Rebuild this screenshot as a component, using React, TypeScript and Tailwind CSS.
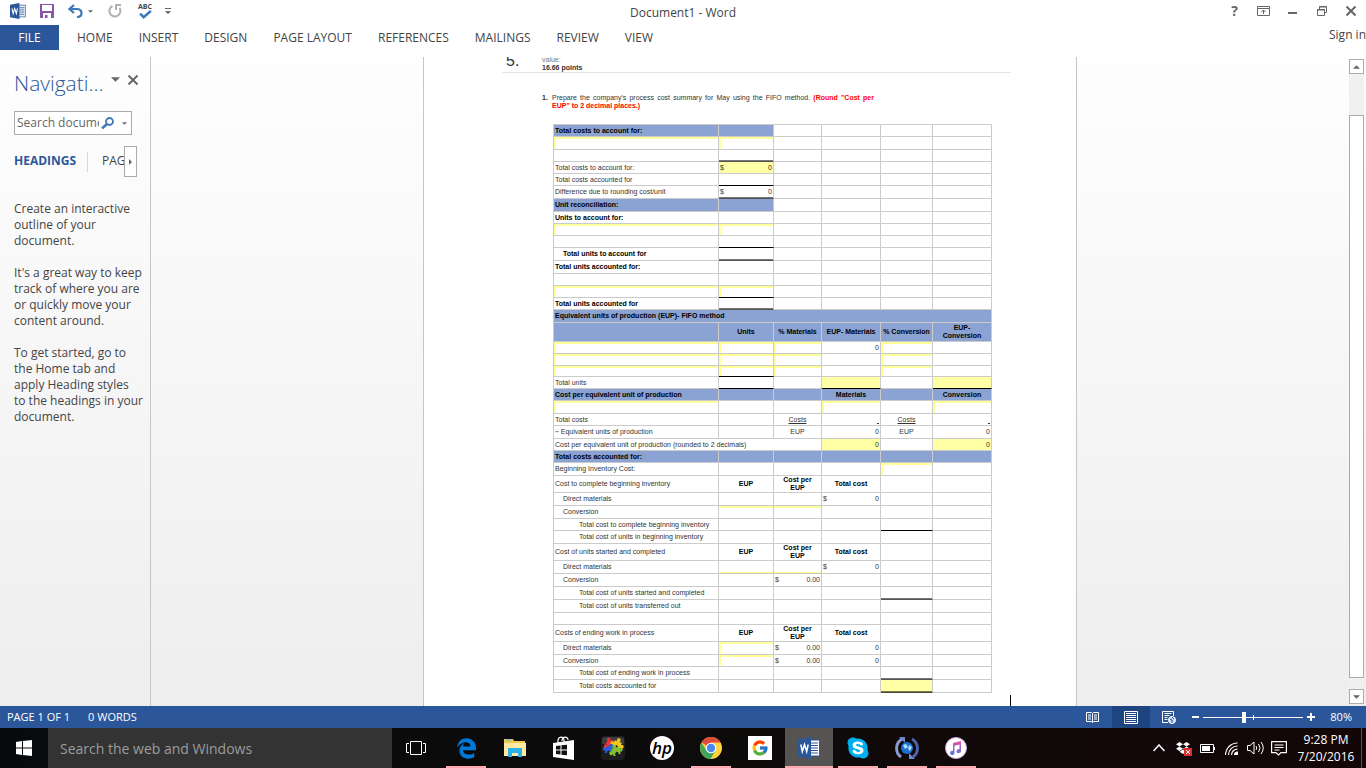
import type { ReactNode } from 'react';
import { FaDropbox, FaEdgeLegacy, FaSkype } from 'react-icons/fa';
import { FcGoogle } from 'react-icons/fc';
import clsx from 'clsx';

type CellKind =
  | 'plain' | 'blue' | 'entry' | 'entryTop' | 'entryBottom' | 'yellow'
  | 'lineBottom' | 'thickBottom' | 'yellowLine' | 'yellowThick' | 'entryLine';

interface Cell {
  text?: ReactNode;
  kind?: CellKind;
  align?: 'center' | 'right';
  bold?: boolean;
  indent?: 1 | 2;
  span?: number;
  dollar?: boolean;
}

interface Row {
  size: 'xs' | 's' | 'm' | 'l' | 'xl';
  cells: Cell[];
}

const kindClass: Record<CellKind, string> = {
  plain: 'border-[#cbcbcb]',
  blue: 'border-[#cbcbcb] bg-[#8aa3d3]',
  entry: 'border-[#cbcbcb] shadow-[inset_2px_2px_0_#ffff99]',
  entryTop: 'border-[#cbcbcb] shadow-[inset_0_2px_0_#ffff99]',
  entryBottom: 'border-[#cbcbcb] shadow-[inset_0_-1px_0_#ffff80]',
  yellow: 'border-[#cbcbcb] bg-[#ffffa6]',
  lineBottom: 'border-r-[#cbcbcb] border-b-black',
  thickBottom: 'border-r-[#cbcbcb] border-b-[#555] shadow-[inset_0_-1px_0_#777]',
  yellowLine: 'border-r-[#cbcbcb] border-b-black bg-[#ffffa6]',
  yellowThick: 'border-r-[#cbcbcb] border-b-[#4a4a35] bg-[#ffffa6] shadow-[inset_0_-1px_0_#77774a]',
  entryLine: 'border-r-[#cbcbcb] border-b-black shadow-[inset_2px_2px_0_#ffff99]',
};

const rowClass = { xs: 'h-[11px]', s: 'h-3', m: 'h-[13px]', l: 'h-[17px]', xl: 'h-[19px]' };

const P: Cell = {};
const B: Cell = { kind: 'blue' };
const E: Cell = { kind: 'entry' };
const LINE: Cell = { kind: 'lineBottom' };
const THICK: Cell = { kind: 'thickBottom' };
const zero: Cell = { text: '0', align: 'right' };
const label = (text: string, indent?: 1 | 2): Cell => ({ text, indent });
const strong = (text: string, indent?: 1 | 2): Cell => ({ text, indent, bold: true });
const head = (text: string): Cell => ({ text, bold: true, kind: 'blue' });
const headMid = (text: ReactNode): Cell => ({ text, bold: true, kind: 'blue', align: 'center' });
const mid = (text: ReactNode, bold = false): Cell => ({ text, bold, align: 'center' });
const money = (text: string, kind?: CellKind): Cell => ({ text, kind, dollar: true });
const costPerEup = mid(<>Cost per<br />EUP</>, true);

const rows: Row[] = [
  { size: 's', cells: [head('Total costs to account for:'), B, P, P, P, P] },
  { size: 'm', cells: [E, E, P, P, P, P] },
  { size: 's', cells: [P, THICK, P, P, P, P] },
  { size: 's', cells: [label('Total costs to account for:'), money('0', 'yellow'), P, P, P, P] },
  { size: 's', cells: [label('Total costs accounted for'), LINE, P, P, P, P] },
  { size: 'm', cells: [label('Difference due to rounding cost/unit'), money('0', 'thickBottom'), P, P, P, P] },
  { size: 'm', cells: [head('Unit reconciliation:'), B, P, P, P, P] },
  { size: 's', cells: [strong('Units to account for:'), P, P, P, P, P] },
  { size: 's', cells: [E, E, P, P, P, P] },
  { size: 's', cells: [P, LINE, P, P, P, P] },
  { size: 'm', cells: [strong('Total units to account for', 1), THICK, P, P, P, P] },
  { size: 'm', cells: [strong('Total units accounted for:'), P, P, P, P, P] },
  { size: 's', cells: [P, P, P, P, P, P] },
  { size: 's', cells: [E, { kind: 'entryLine' }, P, P, P, P] },
  { size: 's', cells: [strong('Total units accounted for'), THICK, P, P, P, P] },
  { size: 'm', cells: [{ ...head('Equivalent units of production (EUP)- FIFO method'), span: 6 }] },
  { size: 'xl', cells: [B, headMid('Units'), headMid('% Materials'), headMid('EUP- Materials'), headMid('% Conversion'), headMid(<>EUP-<br />Conversion</>)] },
  { size: 's', cells: [E, E, E, zero, E, P] },
  { size: 's', cells: [E, E, E, P, E, P] },
  { size: 'xs', cells: [E, { kind: 'entryLine' }, E, P, E, P] },
  { size: 's', cells: [label('Total units'), LINE, P, { kind: 'yellowLine' }, P, { kind: 'yellowLine' }] },
  { size: 's', cells: [head('Cost per equivalent unit of production'), B, B, headMid('Materials'), B, headMid('Conversion')] },
  { size: 'm', cells: [E, P, P, E, P, E] },
  { size: 's', cells: [label('Total costs'), P, mid(<u>Costs</u>), { text: <u>&nbsp;</u>, align: 'right' }, mid(<u>Costs</u>), { text: <u>&nbsp;</u>, align: 'right' }] },
  { size: 'm', cells: [label('÷ Equivalent units of production'), P, mid('EUP'), zero, mid('EUP'), zero] },
  { size: 's', cells: [{ ...label('Cost per equivalent unit of production (rounded to 2 decimals)'), span: 3 }, { ...zero, kind: 'yellow' }, P, { ...zero, kind: 'yellow' }] },
  { size: 's', cells: [head('Total costs accounted for:'), B, B, B, B, B] },
  { size: 'm', cells: [label('Beginning Inventory Cost:'), P, P, P, E, P] },
  { size: 'l', cells: [label('Cost to complete beginning inventory'), mid('EUP', true), costPerEup, mid('Total cost', true), P, P] },
  { size: 'm', cells: [label('Direct materials', 1), P, P, money('0'), P, P] },
  { size: 'm', cells: [label('Conversion', 1), { kind: 'entryTop' }, { kind: 'entryTop' }, P, P, P] },
  { size: 's', cells: [label('Total cost to complete beginning inventory', 2), P, P, P, LINE, P] },
  { size: 'm', cells: [label('Total cost of units in beginning inventory', 2), P, P, P, P, P] },
  { size: 'l', cells: [label('Cost of units started and completed'), mid('EUP', true), costPerEup, mid('Total cost', true), P, P] },
  { size: 'm', cells: [label('Direct materials', 1), { kind: 'entryBottom' }, { kind: 'entryBottom' }, money('0'), P, P] },
  { size: 'm', cells: [label('Conversion', 1), P, money('0.00'), P, P, P] },
  { size: 'm', cells: [label('Total cost of units started and completed', 2), P, P, P, THICK, P] },
  { size: 'm', cells: [label('Total cost of units transferred out', 2), P, P, P, P, P] },
  { size: 's', cells: [P, P, P, P, P, P] },
  { size: 'l', cells: [label('Costs of ending work in process'), mid('EUP', true), costPerEup, mid('Total cost', true), P, P] },
  { size: 'm', cells: [label('Direct materials', 1), E, money('0.00'), zero, P, P] },
  { size: 's', cells: [label('Conversion', 1), E, money('0.00'), zero, P, P] },
  { size: 'm', cells: [label('Total cost of ending work in process', 2), P, P, P, THICK, P] },
  { size: 'm', cells: [label('Total costs accounted for', 2), P, P, P, { kind: 'yellowThick' }, P] },
];

function CostTable() {
  return (
    <table className="w-[439px] table-fixed border-separate border-spacing-0 border-t border-l border-[#cbcbcb] text-[7px] leading-[8px] text-[#333]">
      <colgroup>
        <col className="w-[165px]" />
        <col className="w-[55px]" />
        <col className="w-[48px]" />
        <col className="w-[59px]" />
        <col className="w-[52px]" />
        <col className="w-[59px]" />
      </colgroup>
      <tbody>
        {rows.map((row, i) => (
          <tr key={i} className={rowClass[row.size]}>
            {row.cells.map((cell, j) => (
              <td
                key={j}
                colSpan={cell.span}
                className={clsx(
                  'border-r border-b p-0 align-middle',
                  kindClass[cell.kind ?? 'plain'],
                  cell.bold && 'font-bold text-black',
                  cell.align === 'center' && 'text-center',
                  cell.align === 'right' && 'pr-px text-right',
                  !cell.align && !cell.indent && 'pl-px',
                  cell.indent === 1 && 'pl-[9px]',
                  cell.indent === 2 && 'pl-[25px]',
                )}
              >
                {cell.dollar ? (
                  <div className="flex justify-between pr-px"><span>$</span><span>{cell.text}</span></div>
                ) : cell.text}
              </td>
            ))}
          </tr>
        ))}
      </tbody>
    </table>
  );
}

function WordLogo({ className }: { className: string }) {
  return (
    <svg viewBox="0 0 22 22" className={className}>
      <path d="M11 3h10.500v16H11z" fill="#fff" stroke="#2b579a" />
      <path d="M13 6h7M13 8.500h7M13 11h7M13 13.500h7M13 16h7" stroke="#2b579a" />
      <path d="M0 2.500 13 0v22L0 19.500z" fill="#2b579a" />
      <path d="m2.800 7.500 1.500 7 2.200-7 2.200 7 1.500-7" fill="none" stroke="#fff" strokeWidth="1.500" />
    </svg>
  );
}

function Caret({ className }: { className: string }) {
  return (
    <svg viewBox="0 0 8 4" className={className}><path d="M0 0h8L4 4z" fill="currentColor" /></svg>
  );
}

function TitleBar() {
  return (
    <header className="grid h-[25px] shrink-0 grid-cols-[1fr_auto_1fr] items-start text-[#666]">
      <div className="flex h-[22px] items-center pl-[10px]">
        <WordLogo className="size-4" />
        <button aria-label="Save" className="ml-[14px]">
          <svg viewBox="0 0 14 14" className="size-[14px]">
            <path d="M0 0h14v14H0z" fill="#8a55a8" />
            <path d="M2 1h10v6H2zM3 9h8v5H3z" fill="#fff" />
            <path d="M5 11h2.500v3H5z" fill="#8a55a8" />
          </svg>
        </button>
        <button aria-label="Undo" className="ml-[14px]">
          <svg viewBox="0 0 15 14" className="h-[14px] w-[15px]" fill="none" stroke="#3e78b5" strokeWidth="2.200">
            <path d="M6 1 1.500 5 6 9M2 5h6.500c3 0 5 1.500 5 4s-2 4-4.500 4" />
          </svg>
        </button>
        <button aria-label="Undo history" className="ml-[5px]"><Caret className="h-[3px] w-[5px]" /></button>
        <button aria-label="Repeat" className="ml-[15px]">
          <svg viewBox="0 0 14 14" className="size-[14px]" fill="none" stroke="#b1b1b1" strokeWidth="2">
            <path d="M4.500 2A5.500 5.500 0 1 0 11.500 4M8 6V1h5" />
          </svg>
        </button>
        <button aria-label="Spelling" className="ml-[15px] flex w-[16px] flex-col items-center">
          <span className="text-[7px] leading-[7px] font-bold text-[#444]">ABC</span>
          <svg viewBox="0 0 14 10" className="h-[9px] w-[13px]" fill="none" stroke="#3e78b5" strokeWidth="2.800"><path d="m1 4 4 4 8-7" /></svg>
        </button>
        <button aria-label="Customize toolbar" className="ml-[12px]">
          <svg viewBox="0 0 6 6" className="size-[6px]"><path d="M0 0h6v1H0zM0 3h6L3 6z" fill="currentColor" /></svg>
        </button>
      </div>
      <h1 className="pt-[4px] text-[12px] leading-[18px] text-[#444]">Document1 - Word</h1>
      <div className="flex h-[22px] items-center justify-end pr-px">
        <button aria-label="Help" className="w-[29px] text-center text-[14px] leading-[14px] font-bold">?</button>
        <button aria-label="Ribbon display options" className="flex w-[29px] justify-center">
          <svg viewBox="0 0 13 10" className="h-[10px] w-[13px]" fill="none" stroke="currentColor">
            <path d="M.5.5h12v9H.5zM1 2.500h11M6.500 8V4M4.500 6l2-2 2 2" />
          </svg>
        </button>
        <button aria-label="Minimize" className="flex w-[29px] justify-center">
          <svg viewBox="0 0 9 10" className="h-[10px] w-[9px]"><path d="M0 6h9v2H0z" fill="currentColor" /></svg>
        </button>
        <button aria-label="Restore" className="flex w-[29px] justify-center">
          <svg viewBox="0 0 10 10" className="size-[10px]" fill="none" stroke="currentColor">
            <path d="M2.500 3V.5h7v6H8M.5 3.500h7v6h-7zM2 1h8M0 4h8" />
          </svg>
        </button>
        <button aria-label="Close" className="flex w-[29px] justify-center">
          <svg viewBox="0 0 10 10" className="size-[10px]" stroke="currentColor" strokeWidth="2"><path d="m.5.5 9 9m0-9-9 9" /></svg>
        </button>
      </div>
    </header>
  );
}

const tabs = ['HOME', 'INSERT', 'DESIGN', 'PAGE LAYOUT', 'REFERENCES', 'MAILINGS', 'REVIEW', 'VIEW'];

function Ribbon() {
  return (
    <nav className="flex h-8 shrink-0 items-start text-[12px] leading-[25px] text-[#444]">
      <button className="w-[59px] bg-[#2b579a] text-white">FILE</button>
      <div className="flex gap-[26px] pl-[18px]">
        {tabs.map((tab) => <button key={tab}>{tab}</button>)}
      </div>
      <button className="ml-auto leading-[20px]">Sign in</button>
    </nav>
  );
}

function NavigationPane() {
  return (
    <aside className="w-[151px] shrink-0 border-r border-[#c6c6c6] pl-[14px] text-[12px] leading-4 text-[#444]">
      <div className="flex items-start pt-[11px]">
        <h2 className="w-[97px] text-[21px] leading-[30px] font-light text-[#2b579a]">Navigati...</h2>
        <button aria-label="Pane options" className="pt-[9px] text-[#666]"><Caret className="h-[5px] w-[9px]" /></button>
        <button aria-label="Close pane" className="ml-2 pt-[7px] text-[#666]">
          <svg viewBox="0 0 10 10" className="size-[10px]" stroke="currentColor" strokeWidth="2"><path d="m.5.5 9 9m0-9-9 9" /></svg>
        </button>
      </div>
      <div className="mt-[13px] flex h-6 w-[118px] items-center border border-[#ababab] bg-white">
        <input aria-label="Search document" placeholder="Search document" className="w-[84px] pl-[2px] text-[12px] outline-none placeholder:text-[#666]" />
        <svg viewBox="0 0 13 12" className="ml-[2px] h-[12px] w-[13px]" fill="none" stroke="#3e78b5" strokeWidth="1.800">
          <circle cx="8.500" cy="4.500" r="3.500" /><path d="M6 7 1 11.500" strokeWidth="2.500" />
        </svg>
        <button aria-label="Search options" className="ml-2 text-[#666]"><Caret className="h-[3px] w-[5px]" /></button>
      </div>
      <div className="mt-[11px] flex h-[31px] items-center">
        <button className="w-[73px] pb-[2px] text-left font-bold text-[#2b579a]">HEADINGS</button>
        <div className="h-5 w-px bg-[#d8d8d8]" />
        <button className="ml-[14px] w-[22px] pb-[2px] text-left">PAG</button>
        <button aria-label="More tabs" className="flex h-[31px] w-[13px] items-center justify-center border border-[#ababab] bg-white text-[#666]">
          <svg viewBox="0 0 3 6" className="h-[6px] w-[3px]"><path d="M0 0v6l3-3z" fill="currentColor" /></svg>
        </button>
      </div>
      <div className="mt-6 space-y-4 whitespace-nowrap">
        <p>Create an interactive<br />outline of your<br />document.</p>
        <p>It's a great way to keep<br />track of where you are<br />or quickly move your<br />content around.</p>
        <p>To get started, go to<br />the Home tab and<br />apply Heading styles<br />to the headings in your<br />document.</p>
      </div>
    </aside>
  );
}

function DocumentPage() {
  return (
    <main className="flex min-w-0 flex-1 justify-center overflow-hidden">
      <article className="w-[654px] border-x border-[#c6c6c6] bg-white pr-[65px] pl-[78px] font-['Liberation_Sans',Arial,sans-serif]">
        <div className="flex h-4 items-end overflow-hidden border-b border-[#e4e4e4] pl-1 text-[#333]">
          <span className="w-[36px] text-[16px] leading-[22px]">5.</span>
          <div className="text-[7px] leading-[8px]">
            <p className="text-[#777]">value:</p>
            <p className="font-bold">16.66 points</p>
          </div>
        </div>
        <div className="mt-[21px] flex pl-[40px] text-[7px] leading-[8px] text-[#333]">
          <b className="w-[10px]">1.</b>
          <p className="w-[322px] text-justify">
            Prepare the company's process cost summary for May using the FIFO method.{' '}
            <b className="text-[#f00]">(Round "Cost per EUP" to 2 decimal places.)</b>
          </p>
        </div>
        <div className="mt-[14px] pl-[51px]"><CostTable /></div>
        <div className="mt-[2px] h-[11px] border-r border-black" />
      </article>
    </main>
  );
}

function ScrollBar() {
  return (
    <div className="flex w-[17px] shrink-0 flex-col pt-[2px] pr-[2px] pb-[2px] text-[#666]">
      <button aria-label="Scroll up" className="flex h-[15px] items-center justify-center border border-[#ababab] bg-white">
        <Caret className="h-1 w-[7px] rotate-180" />
      </button>
      <div className="flex flex-1 flex-col bg-[#f0f0f0] pt-[41px] pb-[11px]">
        <div className="flex-1 border border-[#ababab] bg-white" />
      </div>
      <button aria-label="Scroll down" className="flex h-[15px] items-center justify-center border border-[#ababab] bg-white">
        <Caret className="h-1 w-[7px]" />
      </button>
    </div>
  );
}

function StatusBar() {
  return (
    <footer className="flex h-[22px] shrink-0 items-center bg-[#2b579a] pr-[14px] pl-[7px] text-[11px] text-white">
      <span>PAGE 1 OF 1</span>
      <span className="ml-[18px]">0 WORDS</span>
      <div className="ml-auto flex h-full items-center">
        <button aria-label="Read mode" className="flex h-full w-[39px] items-center justify-center">
          <svg viewBox="0 0 13 13" className="size-[13px]" fill="none" stroke="#fff">
            <path d="M.5 1.500h5l1 1 1-1h5v9h-5l-1 1-1-1h-5zM6.500 2v10M2 4h3M2 6h3M2 8h3M8 4h3M8 6h3M8 8h3" />
          </svg>
        </button>
        <button aria-label="Print layout" className="flex h-full w-[38px] items-center justify-center bg-[#1e4580]">
          <svg viewBox="0 0 14 13" className="h-[13px] w-[14px]" fill="none" stroke="#fff">
            <path d="M.5.5h13v12H.5zM2 2.500h10M2 4.500h10M2 6.500h10M2 8.500h10M2 10.500h10" />
          </svg>
        </button>
        <button aria-label="Web layout" className="flex h-full w-[38px] items-center justify-center">
          <svg viewBox="0 0 14 13" className="h-[13px] w-[14px]" fill="none" stroke="#fff">
            <path d="M6 11.500H.5V.5h11V5M2.500 2.500h7M2.500 4.500h5M2.500 6.500h3M2.500 8.500h3" />
            <circle cx="10" cy="9" r="3.500" fill="#c9dbf2" /><path d="m8 8 2 1v3M10 6l2 2" stroke="#2b579a" />
          </svg>
        </button>
        <button aria-label="Zoom out" className="ml-1 h-[2px] w-[7px] bg-white" />
        <div className="relative mx-[4px] flex h-full w-[100px] items-center">
          <div className="absolute top-[9px] left-[50px] h-[5px] w-px bg-white" />
          <input
            type="range" aria-label="Zoom" min={0} max={100} defaultValue={40}
            className="h-3 w-full appearance-none bg-transparent [&::-webkit-slider-runnable-track]:h-px [&::-webkit-slider-runnable-track]:bg-white [&::-webkit-slider-thumb]:-mt-[5px] [&::-webkit-slider-thumb]:h-[11px] [&::-webkit-slider-thumb]:w-1 [&::-webkit-slider-thumb]:appearance-none [&::-webkit-slider-thumb]:bg-white"
          />
        </div>
        <button aria-label="Zoom in">
          <svg viewBox="0 0 8 8" className="size-2"><path d="M3 0h2v3h3v2H5v3H3V5H0V3h3z" fill="#fff" /></svg>
        </button>
        <span className="ml-[15px]">80%</span>
      </div>
    </footer>
  );
}

function ExplorerIcon() {
  return (
    <svg viewBox="0 0 22 20" className="h-5 w-[22px]">
      <path d="M0 1h9l1 2h11v14H0z" fill="#f2c94c" /><path d="M0 5h22v13H0z" fill="#ffe9a2" />
      <path d="M2 1.500h5v1H2z" fill="#58b7e8" />
      <path d="M4 19v-9h14v9h-4v-4H8v4z" fill="#2cb1e8" />
    </svg>
  );
}

function StoreIcon() {
  return (
    <svg viewBox="0 0 22 24" className="h-6 w-[22px]">
      <path d="M0 7 21 4v20L0 21z" fill="#fff" />
      <path d="M5 7V5c0-5 6-5 6-1v2M9 5c0-5 6-5 6-1" fill="none" stroke="#fff" strokeWidth="1.200" />
      <path d="m3 10 4.500-.5v4H3zM8.500 9.300 14 8.700v4.800H8.500zM3 14.500h4.500v4L3 18zM8.500 14.500H14v4.800l-5.500-.6z" fill="#111" />
    </svg>
  );
}

function PuzzleIcon() {
  const piece = 'M-3-3h2a1.500 1.500 0 1 1 2 0h2v2a1.500 1.500 0 1 1 0 2v2h-2a1.500 1.500 0 1 0-2 0h-2v-2a1.500 1.500 0 1 1 0-2z';
  return (
    <svg viewBox="0 0 24 24" className="size-6">
      <rect width="24" height="24" rx="4" fill="#1c1c1c" /><path d="M1 4q0-3 3-3h16q3 0 3 3v4H1z" fill="#3c3c3c" />
      <g transform="translate(9.500 8.500) rotate(-20) scale(1.250)"><path d={piece} fill="#e8343b" /></g>
      <g transform="translate(16 9) rotate(20) scale(1.250)"><path d={piece} fill="#f3c61c" /></g>
      <g transform="translate(8.500 14.500) rotate(20) scale(1.250)"><path d={piece} fill="#2a5fd6" /></g>
      <g transform="translate(15 15.500) rotate(-20) scale(1.250)"><path d={piece} fill="#86bd2e" /></g>
    </svg>
  );
}

function HpIcon() {
  return (
    <span className="flex size-6 items-center justify-center rounded-full bg-white pb-px text-[17px] leading-none font-semibold text-black italic">hp</span>
  );
}

function ChromeIcon() {
  return (
    <svg viewBox="0 0 22 22" className="size-[22px]">
      <circle cx="11" cy="11" r="11" fill="#ffd23f" />
      <path d="M11 11 1.500 5.500A11 11 0 0 1 20.500 5.500H11z" fill="#e04a3a" />
      <path d="M1.500 5.500A11 11 0 0 0 10.500 22l5-8.500L11 16 6.300 13.500z" fill="#3fa757" />
      <circle cx="11" cy="11" r="5.300" fill="#fff" /><circle cx="11" cy="11" r="4.200" fill="#4a87f0" />
    </svg>
  );
}

function SyncIcon() {
  return (
    <svg viewBox="0 0 24 24" className="size-6" fill="none">
      <path d="M7 3C0 7 0 17 6 21" stroke="#8b9bd0" strokeWidth="3" /><path d="M17 3c7 4 7 14 1 18" stroke="#4d62a8" strokeWidth="3" />
      <path d="M4 1h6v6zM20 23h-6v-6z" fill="#7186c6" />
      <circle cx="12" cy="12" r="6" fill="#1d6fd0" /><path d="m8 9 3-1 2 3-3 2zM14 9l3 2-2 4-2-2z" fill="#a9dcff" />
    </svg>
  );
}

function ItunesIcon() {
  return (
    <svg viewBox="0 0 22 22" className="size-[22px]">
      <defs><linearGradient id="note" x1="0" y1="0" x2="0" y2="1"><stop stopColor="#ef4a9b" /><stop offset="1" stopColor="#4a7bea" /></linearGradient></defs>
      <circle cx="11" cy="11" r="10.500" fill="#fff" stroke="#d9a7dc" />
      <path d="M8 6l8-2v10a2.200 2 0 1 1-1.500-1.800V7.500l-5 1.200v7A2.200 2 0 1 1 8 14z" fill="url(#note)" />
    </svg>
  );
}

const apps: { name: string; icon: ReactNode; running?: boolean; active?: boolean }[] = [
  { name: 'Edge', icon: <FaEdgeLegacy className="size-[21px] text-[#0078d7]" />, running: true },
  { name: 'File Explorer', icon: <ExplorerIcon /> },
  { name: 'Store', icon: <StoreIcon /> },
  { name: 'Puzzle', icon: <PuzzleIcon /> },
  { name: 'HP', icon: <HpIcon /> },
  { name: 'Chrome', icon: <ChromeIcon />, running: true },
  { name: 'Google', icon: <span className="bg-white p-[3px]"><FcGoogle className="size-[18px]" /></span> },
  { name: 'Word', icon: <WordLogo className="size-[22px]" />, running: true, active: true },
  { name: 'Skype', icon: <span className="rounded-full bg-[radial-gradient(#fff_45%,transparent_50%)]"><FaSkype className="size-[24px] text-[#00aff0]" /></span>, running: true },
  { name: 'Sync', icon: <SyncIcon />, running: true },
  { name: 'iTunes', icon: <ItunesIcon />, running: true },
];

function Taskbar() {
  return (
    <div className="flex h-10 shrink-0 items-stretch bg-linear-to-r from-[#080b0d] via-[#0d0b0b] to-[#140608] text-white">
      <button aria-label="Start" className="flex w-12 items-center justify-center">
        <svg viewBox="0 0 16 16" className="size-4" fill="#fff"><path d="m0 2 6-.9v6.400H0zM7 1l9-1v7.500H7zM0 8.500h6v6.400L0 14zM7 8.500h9V16l-9-1z" /></svg>
      </button>
      <input aria-label="Search the web and Windows" placeholder="Search the web and Windows" className="w-[344px] bg-[#333] pl-3 text-[14px] outline-none placeholder:text-[#9c9c9c]" />
      <button aria-label="Task view" className="flex w-12 items-center justify-center">
        <svg viewBox="0 0 20 14" className="h-[14px] w-5" fill="none" stroke="#fff"><path d="M4.500.5h11v13h-11zM3 2.500H.5v9H3M17 2.500h2.500v9H17" /></svg>
      </button>
      <div className="flex gap-px pl-[2px]">
        {apps.map((app) => (
          <button
            key={app.name}
            aria-label={app.name}
            className={clsx('flex w-12 flex-col items-center', app.active && 'bg-[#565452]')}
          >
            <span className="flex flex-1 items-center pt-[2px]">{app.icon}</span>
            <span className={clsx('h-[2px]', app.active ? 'w-12' : 'w-10', app.running && 'bg-[#ffa9b0]')} />
          </button>
        ))}
      </div>
      <div className="ml-auto flex items-center">
        <button aria-label="Show hidden icons" className="flex w-6 justify-center">
          <svg viewBox="0 0 12 8" className="h-2 w-3" fill="none" stroke="#fff" strokeWidth="1.500"><path d="m.5 7 5.500-6 5.500 6" /></svg>
        </button>
        <button aria-label="Dropbox" className="relative flex w-6 justify-center">
          <FaDropbox className="size-[14px]" />
          <svg viewBox="0 0 8 8" className="absolute right-[3px] -bottom-px size-2"><path d="M0 0h8v8H0z" fill="#d9302c" /><path d="m2 2 4 4m0-4-4 4" stroke="#fff" /></svg>
        </button>
        <button aria-label="Battery" className="flex w-6 justify-center">
          <svg viewBox="0 0 15 9" className="h-[9px] w-[15px]" fill="none" stroke="#fff"><path d="M.5.5h13v8H.5zM14.500 3v3" /><path d="M2 2h8v5H2z" fill="#fff" stroke="none" /></svg>
        </button>
        <button aria-label="Network" className="flex w-6 justify-center">
          <svg viewBox="0 0 13 13" className="size-[13px]" fill="none" stroke="#fff" strokeWidth="1.200"><path d="M.5 13A12 12 0 0 1 12.500 1M3.500 13a9 9 0 0 1 9-9M6.500 13a6 6 0 0 1 6-6" /><path d="M9.500 13a3 3 0 0 1 3-3v3z" fill="#fff" /></svg>
        </button>
        <button aria-label="Volume" className="flex w-6 justify-center">
          <svg viewBox="0 0 17 14" className="h-[14px] w-[17px]" fill="none" stroke="#fff"><path d="M.5 4.500H3l4-3.500v12L3 9.500H.5zM9 5q1.500 2 0 4M11.500 3q3 4 0 8M14 1q4.500 6 0 12" /></svg>
        </button>
        <button aria-label="Notifications" className="flex w-6 justify-center">
          <svg viewBox="0 0 16 15" className="h-[15px] w-4" fill="none" stroke="#fff" strokeWidth="1.200"><path d="M.6.6h14.800v11H10L7.500 14 5 11.600H.6zM3.500 4h9M3.500 6.500h9M3.500 9h5" /></svg>
        </button>
        <time className="w-[70px] text-center text-[12px] leading-[17px]">9:28 PM<br />7/20/2016</time>
        <button aria-label="Show desktop" className="h-10 w-[5px] border-l border-[#555]" />
      </div>
    </div>
  );
}

export default function App() {
  return (
    <div className="flex h-screen flex-col overflow-hidden bg-white font-['Open_Sans','Noto_Sans',sans-serif]">
      <TitleBar />
      <Ribbon />
      <div className="flex min-h-0 flex-1 bg-linear-to-b from-[#fefefe] to-[#eeeeee]">
        <NavigationPane />
        <DocumentPage />
        <ScrollBar />
      </div>
      <StatusBar />
      <Taskbar />
    </div>
  );
}
